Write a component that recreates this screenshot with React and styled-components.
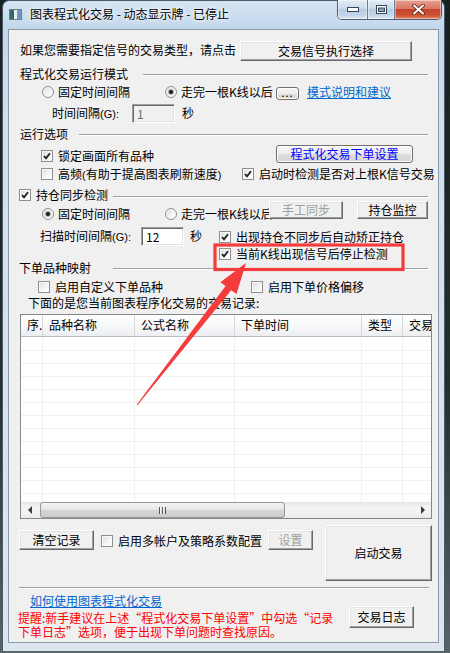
import styled, { createGlobalStyle, css } from "styled-components";

const GlobalStyle = createGlobalStyle`
  html, body {
    margin: 0;
    padding: 0;
  }
  body {
    width: 450px;
    height: 653px;
    overflow: hidden;
    background: linear-gradient(#17211f, #24302e 60%, #59636a);
    font-family: "Noto Sans CJK SC", "Noto Sans", sans-serif;
    font-size: 12px;
    color: #000;
  }
  * {
    box-sizing: border-box;
  }
`;

const columns = [
  { title: "序.", w: 22 },
  { title: "品种名称", w: 92 },
  { title: "公式名称", w: 100 },
  { title: "下单时间", w: 127 },
  { title: "类型", w: 41 },
  { title: "交易", w: 60 },
];

const rows = Array.from({ length: 13 }, (_, i) => i);

function Check({ on }) {
  return (
    <Box>
      {on && (
        <svg width="8" height="8" viewBox="0 0 8 8">
          <path d="M1 4 L3 6.3 L7 1.2" fill="none" stroke="#1e1e1e" strokeWidth="1.8" />
        </svg>
      )}
    </Box>
  );
}

function Radio({ on }) {
  return <Box $round>{on && <Dot />}</Box>;
}

export default function App() {
  return (
    <Screen>
      <GlobalStyle />
      <Window>
        <TitleBar>
          <AppIcon width="13" height="11" viewBox="0 0 13 11">
            <rect x="0.5" y="0.5" width="12" height="10" fill="#d8dde2" stroke="#6f7f86" />
            <rect x="1" y="1" width="4" height="9" fill="#2f6b64" />
            <rect x="5" y="1" width="3" height="9" fill="#e9ecee" />
            <rect x="8" y="1" width="4" height="9" fill="#6f96c2" />
          </AppIcon>
          <Title>图表程式化交易 - 动态显示牌 - 已停止</Title>
          <Caption>
            <CapBtn $w={29}>
              <svg width="12" height="5" viewBox="0 0 12 5">
                <rect x="0.5" y="0.5" width="11" height="4" fill="#fff" stroke="#36465a" />
              </svg>
            </CapBtn>
            <CapBtn $w={27}>
              <svg width="11" height="9" viewBox="0 0 11 9">
                <rect x="0.5" y="0.5" width="10" height="8" fill="#fff" stroke="#36465a" />
                <rect x="2.5" y="3" width="6" height="3.5" fill="#8ea3bb" stroke="#36465a" />
              </svg>
            </CapBtn>
            <CapBtn $w={47} $close>
              <svg width="13" height="11" viewBox="0 0 13 11">
                <path d="M2 1.5 L11 9.5 M11 1.5 L2 9.5" stroke="#5a1a10" strokeWidth="3.6" strokeLinecap="round" />
                <path d="M2 1.5 L11 9.5 M11 1.5 L2 9.5" stroke="#fff" strokeWidth="2" strokeLinecap="round" />
              </svg>
            </CapBtn>
          </Caption>
        </TitleBar>

        <Client>
          <Row $h={20} $mt={11} $pl={11}>
            <Text $w={220} $mt={2}>如果您需要指定信号的交易类型，请点击</Text>
            <Btn $w={172} $h={20}>交易信号执行选择</Btn>
          </Row>

          <Row $h={14} $mt={6} $pl={11} $pr={10}>
            <Text $w={123}>程式化交易运行模式</Text>
            <Rule $mt={7} />
          </Row>

          <Row $h={15} $mt={4} $pl={33}>
            <Option $w={123} $gap={4}>
              <Radio />
              固定时间间隔
            </Option>
            <Option $w={111} $gap={4}>
              <Radio on />
              走完一根K线以后
            </Option>
            <Btn $w={23} $h={13} $mt={2} $rounded>
              <Dots>...</Dots>
            </Btn>
            <Link $ml={8} href="#">模式说明和建议</Link>
          </Row>

          <Row $h={19} $mt={4} $pl={43}>
            <Text $w={80} $mt={2}>
              时间间隔<Latin>(G):</Latin>
            </Text>
            <Field $w={43} $off readOnly value="1" />
            <Text $ml={7} $mt={2}>秒</Text>
          </Row>

          <Row $h={14} $mt={4} $pl={11} $pr={10}>
            <Text $w={59}>运行选项</Text>
            <Rule $mt={7} />
          </Row>

          <Row $h={19} $mt={4} $pl={32}>
            <Option $w={235} $mt={4}>
              <Check on />
              锁定画面所有品种
            </Option>
            <Btn $w={137} $h={18} $rounded $blue>程式化交易下单设置</Btn>
          </Row>

          <Row $h={14} $mt={3} $pl={32}>
            <Option $w={201}>
              <Check />
              <span>
                高频<Latin>(</Latin>有助于提高图表刷新速度<Latin>)</Latin>
              </span>
            </Option>
            <Option>
              <Check on />
              启动时检测是否对上根K信号交易
            </Option>
          </Row>

          <Row $h={13} $mt={7} $pl={10} $pr={10}>
            <Option $w={94}>
              <Check on />
              持仓同步检测
            </Option>
            <Rule $mt={8} />
          </Row>

          <Row $h={21} $pl={33}>
            <Option $w={123} $mt={6} $gap={4}>
              <Radio on />
              固定时间间隔
            </Option>
            <Option $w={104} $mt={6} $gap={4}>
              <Radio />
              走完一根K线以后
            </Option>
            <Btn $w={74} $h={18} $disabled>手工同步</Btn>
            <Btn $w={71} $h={18} $ml={14}>持仓监控</Btn>
          </Row>

          <Row $h={19} $mt={5} $pl={31}>
            <Text $w={101} $mt={2}>
              扫描时间间隔<Latin>(G):</Latin>
            </Text>
            <Field $w={43} readOnly value="12" />
            <Text $w={29} $ml={6} $mt={2}>秒</Text>
            <Option $mt={3}>
              <Check on />
              出现持仓不同步后自动矫正持仓
            </Option>
          </Row>

          <Row $h={14} $mt={1} $pl={210}>
            <Option>
              <Check on />
              当前K线出现信号后停止检测
            </Option>
          </Row>

          <Row $h={14} $pl={10} $pr={10}>
            <Text $w={94}>下单品种映射</Text>
            <Rule $mt={7} />
          </Row>

          <Row $h={14} $mt={5} $pl={29}>
            <Option $w={213}>
              <Check />
              启用自定义下单品种
            </Option>
            <Option>
              <Check />
              启用下单价格偏移
            </Option>
          </Row>

          <Row $h={14} $mt={2} $pl={19}>
            <Text>下面的是您当前图表程序化交易的交易记录:</Text>
          </Row>

          <Table>
            <HeadRow>
              {columns.map((c) => (
                <HeadCell key={c.title} $w={c.w}>
                  {c.title}
                </HeadCell>
              ))}
            </HeadRow>
            <Body>
              {rows.map((r) => (
                <BodyRow key={r}>
                  {columns.map((c) => (
                    <BodyCell key={c.title} $w={c.w} />
                  ))}
                </BodyRow>
              ))}
            </Body>
            <ScrollBar>
              <ScrollArrow>
                <Tri $left />
              </ScrollArrow>
              <Thumb>
                <Grip />
              </Thumb>
              <ScrollArrow $end>
                <Tri />
              </ScrollArrow>
            </ScrollBar>
          </Table>

          <Row $h={56} $mt={6} $pl={10}>
            <Btn $w={75} $h={20} $mt={5}>清空记录</Btn>
            <Option $w={167} $ml={7} $mt={9}>
              <Check />
              启用多帐户及策略系数配置
            </Option>
            <Btn $w={45} $h={20} $mt={5} $disabled>设置</Btn>
            <Btn $w={107} $h={56} $ml={12}>启动交易</Btn>
          </Row>

          <Separator />

          <Footer>
            <FooterText>
              <Link $ml={12} $mt={4} href="#">如何使用图表程式化交易</Link>
              <Notice>
                提醒:新手建议在上述“程式化交易下单设置”中勾选“记录
                <br />
                下单日志”选项，便于出现下单问题时查找原因。
              </Notice>
            </FooterText>
            <Btn $w={65} $h={22} $mt={16}>交易日志</Btn>
          </Footer>
        </Client>
      </Window>

      <Annotation width="450" height="653" viewBox="0 0 450 653">
        <rect x="215" y="245" width="188" height="24.5" fill="none" stroke="#f43c3c" strokeWidth="3.2" />
        <polygon
          fill="#f43c3c"
          points="137.4,405.3 231.2,290.3 236.5,294.1 246,263 220.3,282.3 225.6,286.1 136.6,404.7"
        />
      </Annotation>
    </Screen>
  );
}

const Screen = styled.div`
  position: relative;
  width: 450px;
  height: 653px;
`;

const Window = styled.div`
  margin-left: 2px;
  width: 443px;
  height: 651px;
  padding: 0 5px;
  border: 1px solid #4b5a6b;
  border-bottom: none;
  border-radius: 7px 7px 0 0;
  background: linear-gradient(#d6e4f2 0, #c3d7ec 28px, #d2dfec 120px, #dde6ef 100%);
  display: flex;
  flex-direction: column;
`;

const TitleBar = styled.div`
  height: 28px;
  flex: none;
  display: flex;
  align-items: flex-start;
`;

const AppIcon = styled.svg`
  flex: none;
  margin: 8px 0 0 1px;
`;

const Title = styled.div`
  flex: none;
  margin: 6px 0 0 8px;
  line-height: 14px;
  white-space: nowrap;
  color: #000;
  text-shadow: 0 0 6px #fff, 0 0 3px #fff;
`;

const Caption = styled.div`
  flex: none;
  display: flex;
  margin: -1px -3px 0 auto;
  height: 20px;
  border: 1px solid #4e5f74;
  border-top: none;
  border-radius: 0 0 5px 5px;
  overflow: hidden;
`;

const CapBtn = styled.div`
  flex: none;
  width: ${(p) => p.$w}px;
  height: 100%;
  display: flex;
  align-items: center;
  justify-content: center;
  border-left: 1px solid #6b7d92;
  &:first-child {
    border-left: none;
  }
  background: ${(p) =>
    p.$close
      ? "linear-gradient(#e8a291, #d87866 45%, #c2432b 50%, #cd5233 80%, #e4875f)"
      : "linear-gradient(#e3ecf6, #cbdaeb 45%, #b6cbe2 50%, #c4d6ea 80%, #dbe7f3)"};
  box-shadow: inset 0 0 0 1px rgba(255, 255, 255, 0.45);
`;

const Client = styled.div`
  position: relative;
  height: 614px;
  flex: none;
  background: #f0f0f0;
  border: 1px solid #8a9aad;
  display: flex;
  flex-direction: column;
  overflow: hidden;
`;

const Row = styled.div`
  flex: none;
  display: flex;
  align-items: flex-start;
  height: ${(p) => p.$h}px;
  margin-top: ${(p) => p.$mt || 0}px;
  padding-left: ${(p) => p.$pl || 0}px;
  padding-right: ${(p) => p.$pr || 0}px;
`;

const Text = styled.span`
  flex: none;
  display: block;
  width: ${(p) => (p.$w ? `${p.$w}px` : "auto")};
  margin-top: ${(p) => p.$mt || 0}px;
  margin-left: ${(p) => p.$ml || 0}px;
  line-height: 14px;
  white-space: nowrap;
`;

const Latin = styled.span`
  font-family: "Liberation Sans", "DejaVu Sans", sans-serif;
  font-size: 11px;
`;

const Rule = styled.div`
  flex: 1;
  height: 2px;
  margin-top: ${(p) => p.$mt}px;
  border-top: 1px solid #a0a0a0;
  border-bottom: 1px solid #fff;
`;

const Option = styled.label`
  flex: none;
  display: flex;
  align-items: center;
  gap: ${(p) => p.$gap ?? 5}px;
  width: ${(p) => (p.$w ? `${p.$w}px` : "auto")};
  height: 14px;
  margin-top: ${(p) => p.$mt || 0}px;
  margin-left: ${(p) => p.$ml || 0}px;
  line-height: 14px;
  white-space: nowrap;
`;

const Box = styled.span`
  flex: none;
  width: 12px;
  height: 12px;
  display: flex;
  align-items: center;
  justify-content: center;
  border: 1px solid #8e8f8f;
  border-radius: ${(p) => (p.$round ? "50%" : "0")};
  background: linear-gradient(135deg, #d9d9d9 0%, #f4f4f4 55%, #fff 100%);
  box-shadow: inset 0 0 0 1px #fafafa;
`;

const Dot = styled.span`
  width: 4px;
  height: 4px;
  border-radius: 50%;
  background: #1c1c1c;
  box-shadow: 0 0 1px 1px rgba(40, 40, 40, 0.35);
`;

const Btn = styled.button`
  flex: none;
  width: ${(p) => p.$w}px;
  height: ${(p) => p.$h}px;
  margin: ${(p) => p.$mt || 0}px 0 0 ${(p) => p.$ml || 0}px;
  padding: 0;
  display: flex;
  align-items: center;
  justify-content: center;
  font: inherit;
  line-height: 14px;
  white-space: nowrap;
  color: ${(p) => (p.$disabled ? "#a0a0a0" : p.$blue ? "#0000ff" : "#000")};
  ${(p) =>
    p.$rounded
      ? css`
          border: 1px solid #707070;
          border-radius: 3px;
          background: linear-gradient(#f7f7f7, #ececec 50%, #dfdfdf 51%, #d4d4d4);
          box-shadow: inset 0 0 0 1px #fcfcfc;
        `
      : css`
          border: 1px solid;
          border-color: #fff #696969 #696969 #fff;
          background: #f0f0f0;
          box-shadow: inset -1px -1px 0 #a0a0a0, inset 1px 1px 0 #e3e3e3;
        `}
`;

const Dots = styled.span`
  font-size: 11px;
  line-height: 8px;
  letter-spacing: 1px;
  margin-top: -3px;
`;

const Field = styled.input`
  flex: none;
  width: ${(p) => p.$w}px;
  height: 19px;
  margin: 0;
  padding: 0 0 0 4px;
  font: inherit;
  line-height: 14px;
  border: 1px solid;
  border-color: #a0a0a0 #fff #fff #a0a0a0;
  box-shadow: inset 1px 1px 0 #696969, inset -1px -1px 0 #e3e3e3;
  background: ${(p) => (p.$off ? "#f0f0f0" : "#fff")};
  color: ${(p) => (p.$off ? "#6d6d6d" : "#000")};
  outline: none;
`;

const Link = styled.a`
  flex: none;
  display: block;
  margin-left: ${(p) => p.$ml || 0}px;
  margin-top: ${(p) => p.$mt || 0}px;
  line-height: 14px;
  color: #0066cc;
  text-decoration: underline;
  white-space: nowrap;
`;

const Table = styled.div`
  flex: none;
  margin: 4px 0 0 11px;
  width: 412px;
  height: 205px;
  border: 1px solid #828790;
  background: #fff;
  display: flex;
  flex-direction: column;
  overflow: hidden;
`;

const HeadRow = styled.div`
  flex: none;
  display: flex;
  height: 22px;
  border-bottom: 1px solid #b7bcc3;
  background: linear-gradient(#ffffff, #f6f7f8 55%, #eceef1);
  overflow: hidden;
`;

const HeadCell = styled.div`
  flex: none;
  width: ${(p) => p.$w}px;
  padding: 3px 0 0 6px;
  line-height: 14px;
  white-space: nowrap;
  border-right: 1px solid #d5d8dc;
`;

const Body = styled.div`
  flex: none;
  height: 165px;
  padding-top: 1px;
  overflow: hidden;
`;

const BodyRow = styled.div`
  display: flex;
  height: 13px;
  border-bottom: 1px solid #f0f0f0;
`;

const BodyCell = styled.div`
  flex: none;
  width: ${(p) => p.$w}px;
  border-right: 1px solid #f0f0f0;
`;

const ScrollBar = styled.div`
  flex: none;
  height: 16px;
  display: flex;
  align-items: stretch;
  background: linear-gradient(to bottom, #e6e6e6, #f3f3f3 30%, #f3f3f3 70%, #e9e9e9);
`;

const ScrollArrow = styled.div`
  flex: none;
  width: 17px;
  margin-left: ${(p) => (p.$end ? "auto" : "0")};
  display: flex;
  align-items: center;
  justify-content: center;
`;

const Tri = styled.span`
  width: 0;
  height: 0;
  border-top: 4px solid transparent;
  border-bottom: 4px solid transparent;
  ${(p) =>
    p.$left
      ? css`
          border-right: 4px solid #3c3c3c;
        `
      : css`
          border-left: 4px solid #3c3c3c;
        `}
`;

const Thumb = styled.div`
  flex: none;
  width: 245px;
  margin: 0 0 0 2px;
  border: 1px solid #979797;
  border-radius: 3px;
  background: linear-gradient(#f4f4f4, #e6e6e6 50%, #d6d6d6 51%, #cdcdcd);
  display: flex;
  align-items: center;
  justify-content: center;
`;

const Grip = styled.span`
  width: 7px;
  height: 7px;
  background: repeating-linear-gradient(to right, #555 0 1px, #f7f7f7 1px 2px, transparent 2px 3px);
`;

const Separator = styled.div`
  flex: none;
  margin: 6px 0 0 10px;
  width: 410px;
  height: 2px;
  border-top: 1px solid #a0a0a0;
  border-bottom: 1px solid #fff;
`;

const Footer = styled.div`
  flex: none;
  display: flex;
  align-items: flex-start;
  margin-top: 1px;
  padding-left: 9px;
`;

const FooterText = styled.div`
  flex: none;
  width: 331px;
  display: flex;
  flex-direction: column;
  align-items: flex-start;
`;

const Notice = styled.div`
  margin-top: 3px;
  line-height: 14px;
  color: #ff0000;
  white-space: nowrap;
`;

const Annotation = styled.svg`
  position: absolute;
  top: 0;
  left: 0;
  pointer-events: none;
`;
